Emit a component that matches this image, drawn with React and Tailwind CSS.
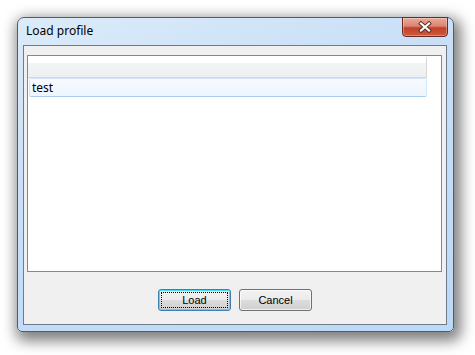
export default function App() {
  return (
    <div className="w-[475px] h-[355px] bg-white pl-[17px] pt-[17px]">
      {/* window frame */}
      <div className="relative flex flex-col w-[437px] h-[315px] border border-[#4f5d6b] rounded-t-[7px] rounded-b-[5px] bg-[linear-gradient(160deg,#dcebf9_0%,#c9e0f7_35%,#bcd9f7_100%)] shadow-[3px_5px_14px_4px_rgba(0,0,0,0.5)]">
        {/* title bar */}
        <div className="h-[27px] pl-[8px] pt-[5px] text-[12px] leading-[16px] text-black font-['Noto_Sans',sans-serif]">
          Load profile
        </div>

        {/* close button */}
        <button className="absolute top-[-1px] right-[5px] w-[46px] h-[20px] flex items-center justify-center rounded-b-[4px] border border-[#6e2a22] bg-[linear-gradient(#eba99a_0%,#db8570_45%,#c2412b_55%,#cc5a3c_100%)] shadow-[inset_0_0_0_1px_rgba(255,255,255,0.3)]">
          <svg width="14" height="12" viewBox="0 0 14 12">
            <path d="M3 2.5l8 7M11 2.5l-8 7" stroke="#5a2a24" strokeWidth="4" strokeLinecap="square" />
            <path d="M3 2.5l8 7M11 2.5l-8 7" stroke="#ffffff" strokeWidth="2.2" strokeLinecap="square" />
          </svg>
        </button>

        {/* client area */}
        <div className="ml-[5px] mr-[6px] w-[424px] h-[280px] border border-[#6d7b8a] bg-[#f0f0f0] flex flex-col">
          <div className="ml-[3px] mt-[9px] w-[415px] h-[217px] border border-[#828790] bg-white pt-[1px]">
            <div className="w-[399px] h-[21px] border-r border-b border-[#d5d5d5] bg-[linear-gradient(#ffffff_0%,#ffffff_30%,#f3f4f5_32%,#eeeff1_100%)]" />
            <div className="w-[398px] h-[19px] ml-[1px] flex items-center pl-[2px] rounded-[2px] border border-[#d6e6f9] border-b-[#a9ccf1] bg-[linear-gradient(#f7fbff,#edf5fd)] text-black text-[12px] font-['Noto_Sans',sans-serif]">
              test
            </div>
          </div>

          <div className="mt-[17px] flex justify-center gap-[8px] font-['Liberation_Sans',Arial,sans-serif] text-[11px] text-black">
            <button className="w-[73px] h-[22px] rounded-[3px] border border-[#3c7fb1] bg-[linear-gradient(#f2f2f2_0%,#ebebeb_50%,#dddddd_51%,#cfcfcf_100%)] shadow-[inset_0_0_0_1px_#48dcf9] p-[2px]">
              <div className="w-full h-full flex items-center justify-center border border-dotted border-black">
                Load
              </div>
            </button>
            <button className="w-[73px] h-[22px] rounded-[3px] border border-[#707070] bg-[linear-gradient(#f2f2f2_0%,#ebebeb_50%,#dddddd_51%,#cfcfcf_100%)] shadow-[inset_0_0_0_1px_rgba(255,255,255,0.7)] flex items-center justify-center">
              Cancel
            </button>
          </div>
        </div>
      </div>
    </div>
  );
}
